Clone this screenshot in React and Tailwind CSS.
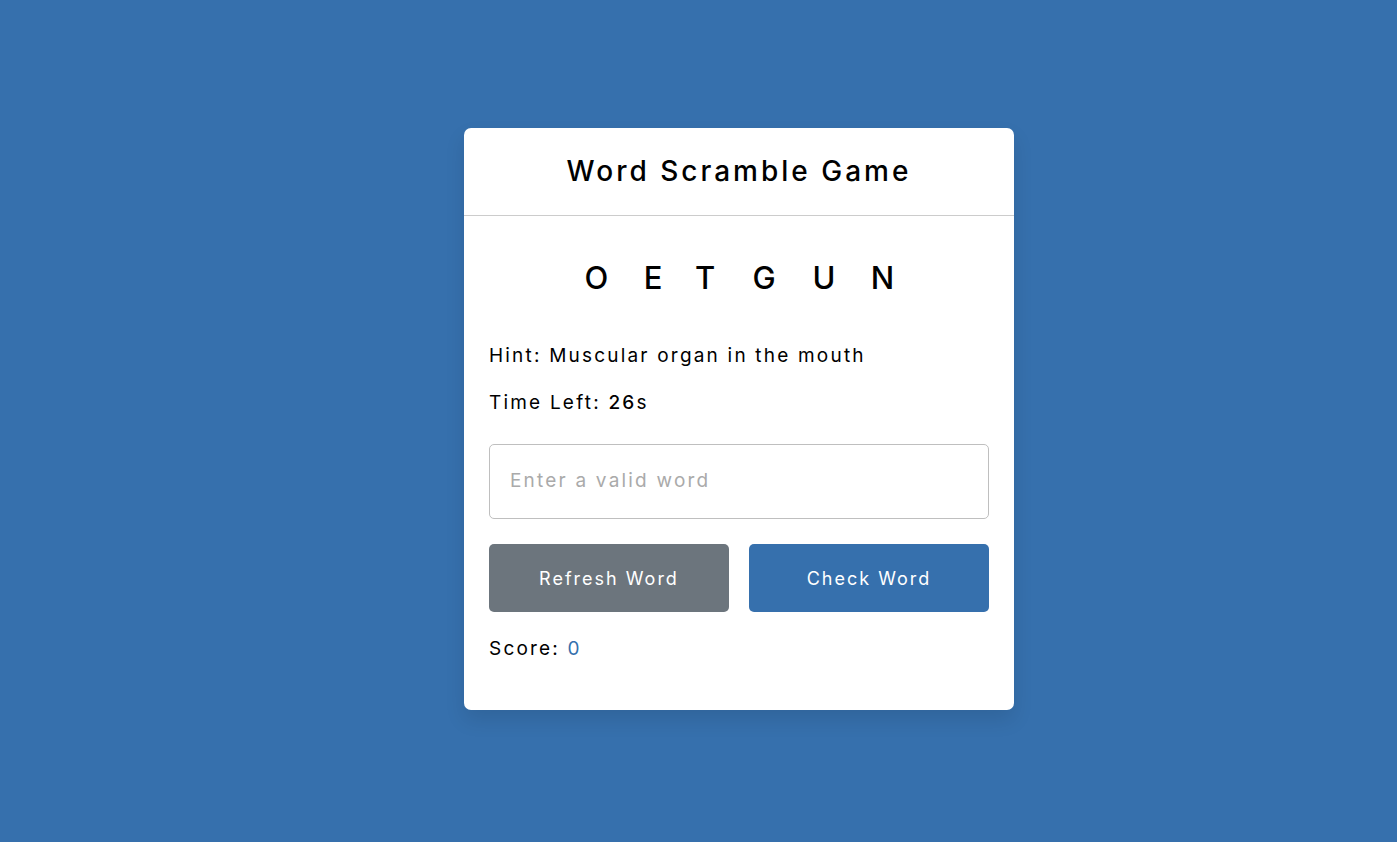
export default function App() {
  const font = { fontFamily: '"Inter", "Open Sans", sans-serif' };
  const letters = [
    ["O", "w-[57px]"],
    ["E", "w-[56px]"],
    ["T", "w-[48px]"],
    ["G", "w-[70px]"],
    ["U", "w-[50px]"],
    ["N", "w-[67px]"],
  ];
  return (
    <div className="min-h-screen w-full bg-[#3670ad] flex justify-center pt-[128px] pl-[81px]" style={font}>
      <div className="w-[550px] h-[582px] bg-white rounded-[7px] shadow-[0_10px_20px_rgba(0,0,0,0.1)] flex flex-col">
        <div className="h-[88px] border-b border-[#cccccc] flex items-center justify-center">
          <h2 className="text-[28px] font-medium text-black leading-none tracking-[3px] -mt-[2px]">Word Scramble Game</h2>
        </div>
        <div className="px-[25px] flex flex-col">
          <div className="mt-[43px] h-[36px] flex justify-start pl-[79px] items-center text-[31px] font-medium text-black leading-none">
            {letters.map(([l, w], i) => (
              <span key={i} className={`${w} text-center`}>{l}</span>
            ))}
          </div>
          <p className="mt-[49px] text-[19px] leading-[24px] text-black tracking-[2.2px]">Hint: Muscular organ in the mouth</p>
          <p className="mt-[23px] text-[19px] leading-[24px] text-black tracking-[2.2px]">Time Left: <span className="font-medium">26</span>s</p>
          <div className="mt-[29px] h-[75px] border border-[#bfbfbf] rounded-[5px] flex items-center px-[20px]">
            <span className="text-[19px] text-[#aaaaaa] tracking-[2.2px]">Enter a valid word</span>
          </div>
          <div className="mt-[25px] flex gap-[20px]">
            <button className="flex-1 h-[68px] bg-[#6c757d] text-white rounded-[5px] text-[18px] tracking-[2px]">Refresh Word</button>
            <button className="flex-1 h-[68px] bg-[#3670ad] text-white rounded-[5px] text-[18px] tracking-[2px]">Check Word</button>
          </div>
          <p className="mt-[25px] text-[19px] leading-[24px] text-black tracking-[2.2px]">Score: <span className="text-[#3670ad]">0</span></p>
        </div>
      </div>
    </div>
  );
}
